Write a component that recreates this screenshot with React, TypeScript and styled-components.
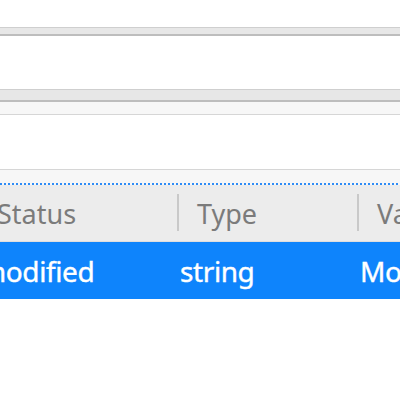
import styled, { createGlobalStyle } from 'styled-components';

const Global = createGlobalStyle`
  html, body {
    margin: 0;
    padding: 0;
    background: #ffffff;
  }
  body {
    width: 400px;
    height: 400px;
    overflow: hidden;
    font-family: "Noto Sans", "DejaVu Sans", sans-serif;
  }
`;

const Window = styled.div`
  display: flex;
  flex-direction: column;
  width: 400px;
  height: 400px;
  overflow: hidden;
  background: #ffffff;
`;

const Blank = styled.div<{ $h: number; $bg?: string }>`
  height: ${({ $h }) => $h}px;
  flex-shrink: 0;
  background: ${({ $bg }) => $bg ?? '#ffffff'};
`;

const Pane = styled.div<{ $h: number; $bg: string }>`
  height: ${({ $h }) => $h}px;
  flex-shrink: 0;
  background: ${({ $bg }) => $bg};
  border-top: 1px solid #d6d6d6;
`;

const Separator = styled.div<{ $h: number }>`
  height: ${({ $h }) => $h}px;
  flex-shrink: 0;
  background: #e7e7e7;
  border-top: 1px solid #cfcfcf;
  border-bottom: 2px solid #bdbdbd;
`;

const FocusLine = styled.div`
  height: 2px;
  flex-shrink: 0;
  background: repeating-linear-gradient(
    to right,
    #2f8cf5 0 2px,
    transparent 2px 4px
  );
  background-color: #f7f7f7;
`;

const TreeScroll = styled.div`
  flex: 1;
  overflow: hidden;
`;

const Tree = styled.div`
  display: grid;
  grid-template-columns: 200px 180px 200px;
  margin-left: -23px;
`;

const HeaderCell = styled.div<{ $sep?: boolean }>`
  height: 56px;
  display: flex;
  align-items: center;
  padding-left: 20px;
  background: #ececec;
  border-bottom: 1px solid #dedede;
  font-size: 27px;
  color: #7b7b7b;
  white-space: nowrap;
  position: relative;
  &::before {
    content: '';
    display: ${({ $sep }) => ($sep ? 'block' : 'none')};
    position: absolute;
    left: 0;
    top: 9px;
    bottom: 10px;
    width: 2px;
    background: #c9c9c9;
  }
`;

const RowCell = styled.div`
  height: 57px;
  display: flex;
  align-items: center;
  padding-left: 3px;
  background: #0e84fc;
  color: #ffffff;
  font-size: 28px;
  letter-spacing: -0.4px;
  -webkit-text-stroke: 0.4px #ffffff;
  white-space: nowrap;
`;

export default function App() {
  return (
    <>
      <Global />
      <Window>
        <Blank $h={27} />
        <Separator $h={6} />
        <Blank $h={53} />
        <Separator $h={10} />
        <Blank $h={12} $bg="#f7f7f7" />
        <Pane $h={54} $bg="#ffffff" />
        <Pane $h={13} $bg="#f7f7f7" />
        <FocusLine />
        <TreeScroll>
          <Tree>
            <HeaderCell>Status</HeaderCell>
            <HeaderCell $sep>Type</HeaderCell>
            <HeaderCell $sep>Value</HeaderCell>
            <RowCell>modified</RowCell>
            <RowCell>string</RowCell>
            <RowCell>Modified</RowCell>
          </Tree>
        </TreeScroll>
      </Window>
    </>
  );
}
